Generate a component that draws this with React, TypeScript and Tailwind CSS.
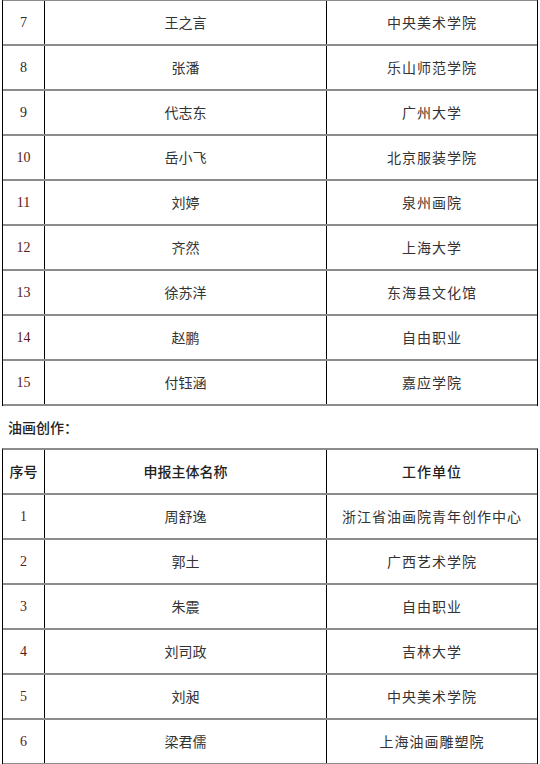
const firstRows = [
  { no: '7', name: '王之言', unit: '中央美术学院', red: false },
  { no: '8', name: '张潘', unit: '乐山师范学院', red: false },
  { no: '9', name: '代志东', unit: '广州大学', red: false },
  { no: '10', name: '岳小飞', unit: '北京服装学院', red: true },
  { no: '11', name: '刘婷', unit: '泉州画院', red: true },
  { no: '12', name: '齐然', unit: '上海大学', red: true },
  { no: '13', name: '徐苏洋', unit: '东海县文化馆', red: true },
  { no: '14', name: '赵鹏', unit: '自由职业', red: true },
  { no: '15', name: '付钰涵', unit: '嘉应学院', red: true },
]

const oilRows = [
  { no: '1', name: '周舒逸', unit: '浙江省油画院青年创作中心' },
  { no: '2', name: '郭土', unit: '广西艺术学院' },
  { no: '3', name: '朱震', unit: '自由职业' },
  { no: '4', name: '刘司政', unit: '吉林大学' },
  { no: '5', name: '刘昶', unit: '中央美术学院' },
  { no: '6', name: '梁君儒', unit: '上海油画雕塑院' },
]

const cjk = "font-['Noto_Sans_CJK_SC',sans-serif]"

function Row({ no, name, unit, red }: { no: string; name: string; unit: string; red?: boolean }) {
  return (
    <div className="flex h-[45px] border-b-2 border-[#8c8c8c]">
      <div
        className={`w-[42px] flex items-center justify-center border-r border-black font-['Liberation_Serif',serif] text-[14px] ${
          red ? 'text-[#5b1a1a]' : 'text-[#2a2a2a]'
        }`}
      >
        {no}
      </div>
      <div className={`w-[282px] flex items-center justify-center border-r border-black text-[14px] text-[#333] ${cjk}`}>
        {name}
      </div>
      <div className={`flex-1 flex items-center justify-center text-[14px] text-[#333] tracking-[1px] ${cjk}`}>
        {unit}
      </div>
    </div>
  )
}

export default function App() {
  return (
    <div className="w-[540px] h-[764px] overflow-hidden bg-white px-[2px]">
      {/* 前一部分表格 */}
      <div className="border-l border-r border-black border-t-2 border-t-[#8c8c8c] -mt-[1px]">
        {firstRows.map((r) => (
          <Row key={r.no} {...r} />
        ))}
      </div>

      <div className={`h-[42px] flex items-center pl-[6px] text-[14px] font-medium text-[#222] ${cjk}`}>
        油画创作：
      </div>

      {/* 油画创作 */}
      <div className="border-l border-r border-black border-t-2 border-t-[#8c8c8c]">
        <div className="flex h-[45px] border-b-2 border-[#8c8c8c]">
          <div className={`w-[42px] flex items-center justify-center border-r border-black text-[14px] font-medium text-[#222] ${cjk}`}>
            序号
          </div>
          <div className={`w-[282px] flex items-center justify-center border-r border-black text-[14px] font-medium text-[#222] ${cjk}`}>
            申报主体名称
          </div>
          <div className={`flex-1 flex items-center justify-center text-[14px] font-medium text-[#222] tracking-[1px] ${cjk}`}>
            工作单位
          </div>
        </div>
        {oilRows.map((r) => (
          <Row key={r.no} {...r} red />
        ))}
      </div>
    </div>
  )
}
